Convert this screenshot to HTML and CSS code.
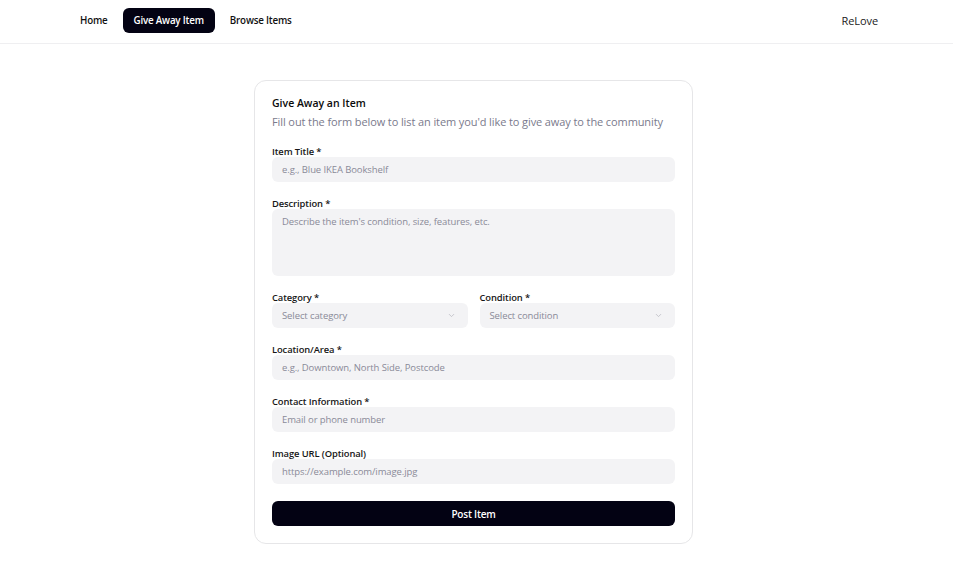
FILE: index.html
```html
<!DOCTYPE html>
<html lang="en">
<head>
<meta charset="utf-8">
<title>ReLove - Give Away an Item</title>
<link rel="stylesheet" href="styles.css">
</head>
<body>
<header class="topbar">
  <nav class="nav">
    <a class="nav-link" href="#">Home</a>
    <a class="nav-link active" href="#">Give Away Item</a>
    <a class="nav-link" href="#">Browse Items</a>
  </nav>
  <div class="brand">ReLove</div>
</header>
<main class="page">
  <section class="card">
    <div class="card-head">
      <h1 class="card-title">Give Away an Item</h1>
      <p class="card-sub">Fill out the form below to list an item you'd like to give away to the community</p>
    </div>
    <form class="form">
      <div class="field">
        <label class="label">Item Title *</label>
        <div class="input"><span class="ph">e.g., Blue IKEA Bookshelf</span></div>
      </div>
      <div class="field">
        <label class="label">Description *</label>
        <div class="input textarea"><span class="ph">Describe the item's condition, size, features, etc.</span></div>
      </div>
      <div class="row">
        <div class="field">
          <label class="label">Category *</label>
          <div class="input select"><span class="ph">Select category</span>
            <svg class="chev" viewBox="0 0 24 24" width="9" height="9"><path d="m6 9 6 6 6-6" fill="none" stroke="currentColor" stroke-width="2" stroke-linecap="round" stroke-linejoin="round"/></svg>
          </div>
        </div>
        <div class="field">
          <label class="label">Condition *</label>
          <div class="input select"><span class="ph">Select condition</span>
            <svg class="chev" viewBox="0 0 24 24" width="9" height="9"><path d="m6 9 6 6 6-6" fill="none" stroke="currentColor" stroke-width="2" stroke-linecap="round" stroke-linejoin="round"/></svg>
          </div>
        </div>
      </div>
      <div class="field">
        <label class="label">Location/Area *</label>
        <div class="input"><span class="ph">e.g., Downtown, North Side, Postcode</span></div>
      </div>
      <div class="field">
        <label class="label">Contact Information *</label>
        <div class="input"><span class="ph">Email or phone number</span></div>
      </div>
      <div class="field">
        <label class="label">Image URL (Optional)</label>
        <div class="input"><span class="ph">https://example.com/image.jpg</span></div>
      </div>
      <button type="button" class="submit">Post Item</button>
    </form>
  </section>
</main>
</body>
</html>
```
FILE: styles.css
```css
* { box-sizing: border-box; }
html, body { margin: 0; padding: 0; background: #ffffff; }
body {
  font-family: "Open Sans", "Noto Sans", "Liberation Sans", sans-serif;
  color: #0a0a0a;
}
.topbar {
  display: flex;
  align-items: center;
  justify-content: space-between;
  height: 44px;
  padding: 0 75px 2px 69px;
  border-bottom: 1px solid #efeff1;
}
.nav { display: flex; gap: 4px; }
.nav-link {
  display: flex;
  align-items: center;
  height: 25px;
  padding: 0 11px;
  border-radius: 6px;
  font-size: 9.8px;
  font-weight: 600;
  color: #111;
  text-decoration: none;
  letter-spacing: -0.2px;
}
.nav-link.active { background: #030213; color: #fff; }
.brand { font-size: 11px; color: #222; letter-spacing: -0.1px; }

.page {
  display: flex;
  justify-content: center;
  padding: 36px 6px 0 0;
}
.card {
  width: 439px;
  border: 1px solid #e6e6e8;
  border-radius: 12px;
  padding: 15px 17px 17px;
}
.card-head { display: flex; flex-direction: column; gap: 2px; margin-bottom: 15px; }
.card-title { margin: 0; font-size: 10.5px; line-height: 15px; font-weight: 600; }
.card-sub { margin: 0; font-size: 11px; line-height: 17px; color: #7a7a8c; letter-spacing: -0.1px; }

.form { display: flex; flex-direction: column; gap: 15px; }
.field { display: flex; flex-direction: column; flex: 1; }
.label { font-size: 9.4px; line-height: 12px; font-weight: 600; color: #161616; letter-spacing: -0.1px; margin-top: 1px; margin-bottom: -1px; }
.row { display: flex; gap: 12px; }
.input {
  display: flex;
  align-items: center;
  height: 25px;
  padding: 0 10px;
  background: #f3f3f5;
  border-radius: 6px;
}
.textarea { height: 67px; align-items: flex-start; padding-top: 6px; }
.select { justify-content: space-between; }
.ph { font-size: 9.5px; color: #8a8a98; letter-spacing: -0.1px; }
.chev { color: #b8b8c0; margin-right: 2px; }
.submit {
  margin-top: 2px;
  height: 25px;
  border: none;
  border-radius: 6px;
  background: #030213;
  color: #fff;
  font-family: inherit;
  font-size: 10px;
  font-weight: 600;
  letter-spacing: -0.2px;
}
```
